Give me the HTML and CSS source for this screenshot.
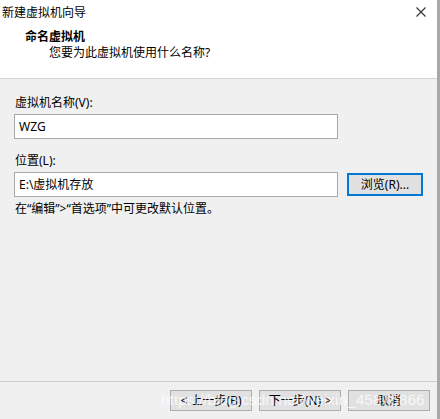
FILE: index.html
```html
<!DOCTYPE html>
<html lang="zh-CN">
<head>
<meta charset="utf-8">
<title>新建虚拟机向导</title>
<link rel="stylesheet" href="styles.css">
</head>
<body>
<div class="window">
  <div class="header">
    <div class="titlebar">
      <span class="title">新建虚拟机向导</span>
      <svg class="close" width="10" height="10" viewBox="0 0 10 10"><path d="M0.5 0.5 L9.5 9.5 M9.5 0.5 L0.5 9.5" stroke="#333" stroke-width="1.1" fill="none"/></svg>
    </div>
    <div class="heading">命名虚拟机</div>
    <div class="subheading">您要为此虚拟机使用什么名称?</div>
  </div>
  <div class="content">
    <div class="label">虚拟机名称(V):</div>
    <div class="input name-input">WZG</div>
    <div class="label label-gap">位置(L):</div>
    <div class="row">
      <div class="input">E:\虚拟机存放</div>
      <div class="btn browse">浏览(R)...</div>
    </div>
    <div class="hint">在“编辑”&gt;“首选项”中可更改默认位置。</div>
  </div>
  <div class="footer">
    <div class="btn">&lt; 上一步(B)</div>
    <div class="btn">下一步(N) &gt;</div>
    <div class="btn">取消</div>
    <div class="watermark">https://blog.csdn.net/weixin_45875866</div>
  </div>
</div>
</body>
</html>
```
FILE: styles.css
```css
html, body {
  margin: 0;
  padding: 0;
}
body {
  width: 440px;
  height: 419px;
  overflow: hidden;
  font-family: "Noto Sans", "Noto Sans CJK SC", sans-serif;
  font-size: 12px;
  color: #000;
  background: #f0f0f0;
}
.window {
  box-sizing: border-box;
  width: 440px;
  height: 419px;
  display: flex;
  flex-direction: column;
  border-right: 3px solid #a8a8a8;
}
.header {
  background: #fff;
  height: 78px;
  border-bottom: 1px solid #d6d6d6;
  box-sizing: content-box;
}
.titlebar {
  height: 26px;
  display: flex;
  align-items: center;
  justify-content: space-between;
  padding: 0 11px 0 2px;
}
.title {
  font-size: 12px;
  line-height: 16px;
}
.close {
  display: block;
  margin-top: -2px;
}
.heading {
  margin: 3px 0 0 25px;
  font-weight: bold;
  line-height: 16px;
  font-size: 12px;
}
.subheading {
  margin: 0 0 0 49px;
  line-height: 16px;
}
.content {
  flex: 1;
  padding: 16px 0 0 14px;
  border-bottom: 1px solid #cdcdcd;
}
.label {
  line-height: 16px;
  padding-left: 1px;
}
.label-gap {
  margin-top: 14px;
}
.input {
  box-sizing: border-box;
  width: 324px;
  height: 25px;
  background: #fff;
  border: 1px solid #a9a9a9;
  padding: 0 4px;
  line-height: 23px;
  margin-top: 3px;
}
.name-input {
  padding-left: 4px;
}
.row {
  display: flex;
  align-items: center;
  gap: 9px;
  margin-top: 3px;
}
.row .input {
  margin-top: 0;
}
.btn {
  box-sizing: border-box;
  width: 82px;
  height: 21px;
  background: #e1e1e1;
  border: 1px solid #adadad;
  display: flex;
  align-items: center;
  justify-content: center;
  line-height: 16px;
}
.browse {
  width: 76px;
  height: 23px;
  border: 1px solid #0078d7;
  box-shadow: inset 0 0 0 1px #0078d7;
}
.hint {
  margin-top: 4px;
  line-height: 16px;
  padding-left: 1px;
}
.footer {
  position: relative;
  height: 37px;
  display: flex;
  justify-content: flex-end;
  gap: 7px;
  padding: 8px 7px 0 0;
  box-sizing: border-box;
}
.watermark {
  position: absolute;
  left: 161px;
  top: 8px;
  font-family: "Liberation Sans", Arial, sans-serif;
  font-size: 15.5px;
  line-height: 20px;
  color: rgba(255, 255, 255, 0.75);
  white-space: nowrap;
  pointer-events: none;
}
```
